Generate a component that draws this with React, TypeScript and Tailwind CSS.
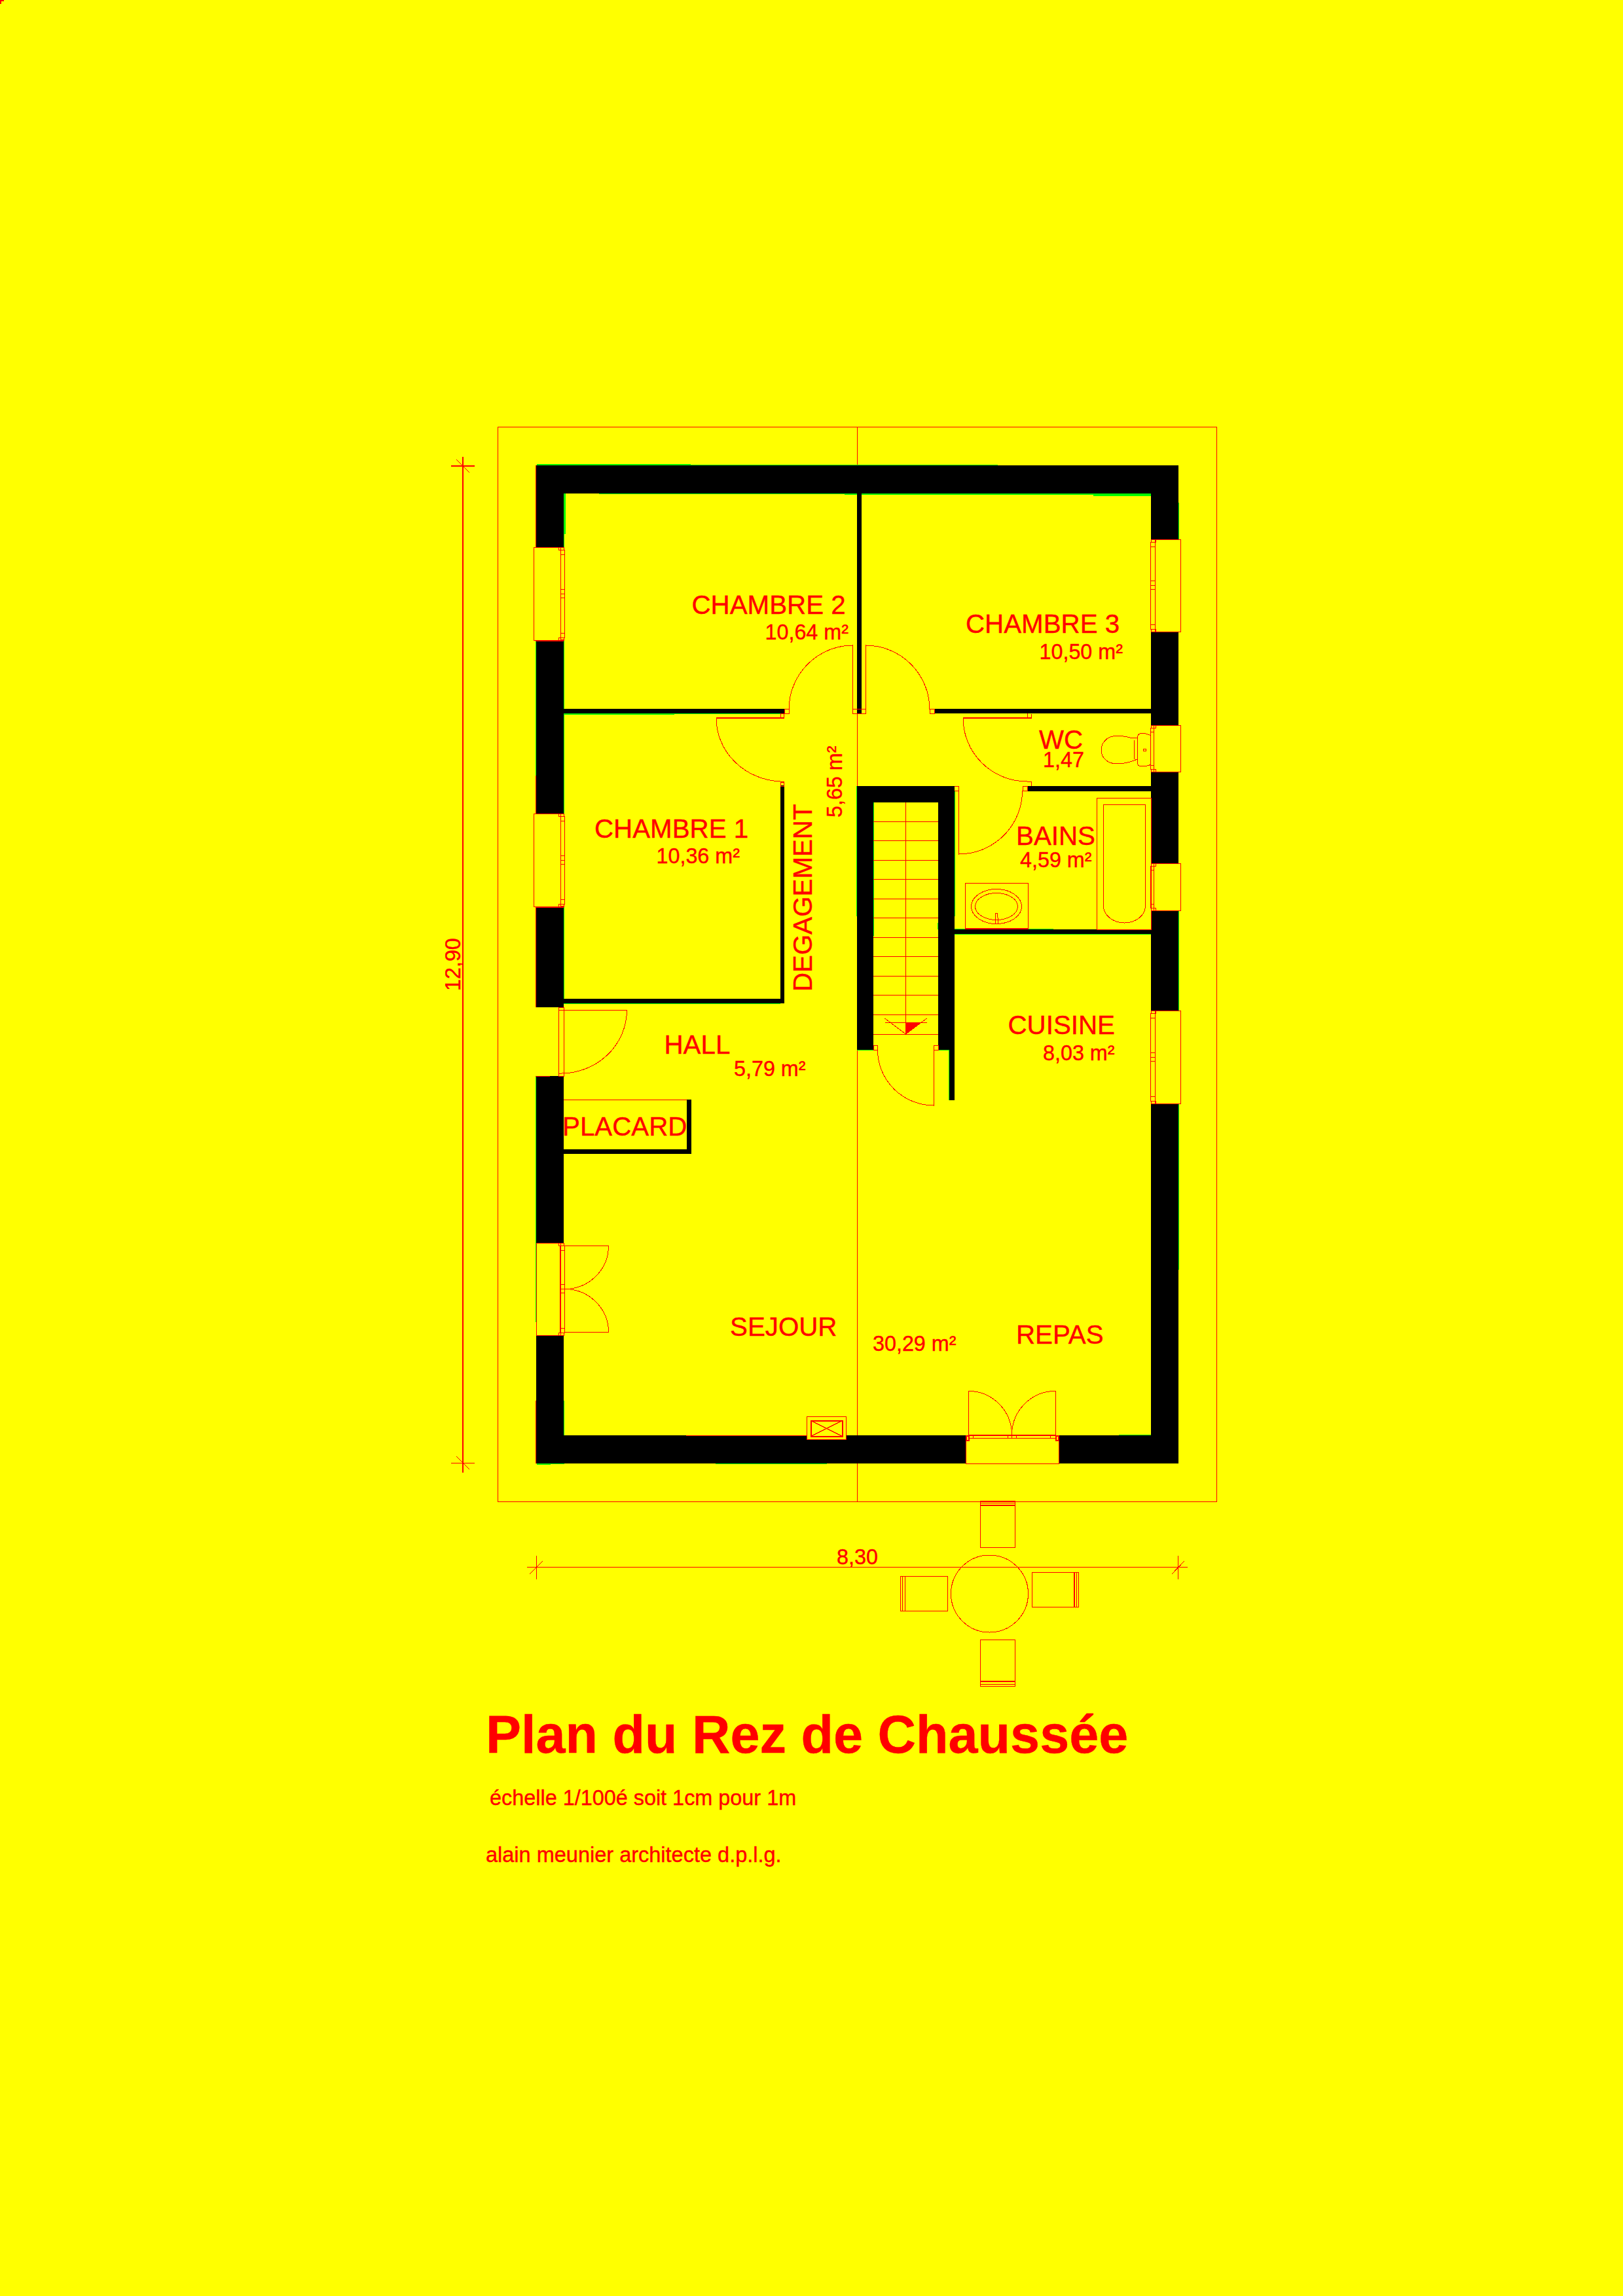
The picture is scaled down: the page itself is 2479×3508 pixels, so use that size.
import React from "react";

const RED = "#ff0000";
const YEL = "#ffff00";
const GRN = "#00ff00";

type Box = [number, number, number, number];

const walls: Box[] = [
  [819, 711, 1800, 754],
  [819, 754, 861, 837], [819, 979, 861, 1243], [819, 1386, 861, 1539], [819, 1644, 861, 1899], [819, 2040, 861, 2236],
  [1758, 754, 1800, 824], [1758, 965, 1800, 1108], [1758, 1179, 1800, 1319], [1758, 1391, 1800, 1544], [1758, 1686, 1800, 2236],
  [861, 2193, 1475, 2236], [1617, 2193, 1758, 2236],
  [1309, 754, 1316, 1090],
  [861, 1083, 1198, 1090],
  [1427, 1083, 1758, 1090],
  [1569, 1201, 1758, 1209],
  [1458, 1420, 1758, 1427],
  [1192, 1200, 1198, 1533],
  [861, 1526, 1198, 1533],
  [1049, 1680, 1056, 1763],
  [861, 1756, 1056, 1763],
  [1309, 1201, 1458, 1226],
  [1309, 1226, 1334, 1604],
  [1433, 1226, 1458, 1604],
  [1450, 1604, 1458, 1681],
];

const greens: Box[] = [
  [820, 709, 1055, 711], [1055, 710, 1524, 711],
  [915, 754, 1290, 755], [1290, 754, 1670, 756], [1670, 754, 1758, 758],
  [861, 754, 864, 816], [861, 816, 862, 837], [861, 979, 862, 1243], [861, 1386, 862, 1526],
  [861, 1090, 1030, 1092], [1030, 1090, 1198, 1091], [861, 1533, 1192, 1534],
  [1800, 768, 1801, 824], [1800, 1391, 1801, 1544], [1800, 1686, 1801, 1940],
  [1333, 1226, 1335, 1430], [1432, 1410, 1434, 1420], [1458, 1209, 1459, 1400],
  [1308, 1201, 1309, 1400], [1309, 1604, 1334, 1605], [1433, 1604, 1450, 1605], [1449, 1605, 1450, 1681],
  [1458, 1427, 1758, 1428], [1458, 1419, 1609, 1420],
  [820, 2236, 841, 2238], [841, 2236, 862, 2237], [1093, 2236, 1263, 2237], [1709, 2192, 1758, 2193],
  [861, 2140, 862, 2193], [818, 979, 819, 1185], [818, 1644, 819, 2020],
];

const redEdges: Box[] = [
  [818, 711, 819, 837], [818, 1185, 819, 1539], [818, 2140, 819, 2236],
  [818, 977, 861, 980], [818, 1384, 861, 1387], [818, 1644, 840, 1645], [1048, 2193, 1232, 2194],
];

const treads = [1255, 1284, 1314, 1343, 1373, 1402, 1432, 1461, 1491, 1520, 1550, 1580];

type Label = { t: string; x: number; y: number; s: number; r?: boolean };

const labels: Label[] = [
  { t: "CHAMBRE 2", x: 1056.5, y: 938, s: 40.3 },
  { t: "10,64 m²", x: 1168.5, y: 977, s: 32.3 },
  { t: "CHAMBRE 3", x: 1475, y: 967, s: 40.3 },
  { t: "10,50 m²", x: 1587.5, y: 1007, s: 32.3 },
  { t: "WC", x: 1587, y: 1144, s: 40.3 },
  { t: "1,47", x: 1593, y: 1172, s: 32.3 },
  { t: "BAINS", x: 1552, y: 1291, s: 40.3 },
  { t: "4,59 m²", x: 1558, y: 1325, s: 32.3 },
  { t: "CUISINE", x: 1539.5, y: 1580, s: 40.3 },
  { t: "8,03 m²", x: 1593, y: 1620, s: 32.3 },
  { t: "CHAMBRE 1", x: 908, y: 1280, s: 40.3 },
  { t: "10,36 m²", x: 1002.5, y: 1319, s: 32.3 },
  { t: "HALL", x: 1014.5, y: 1610, s: 40.3 },
  { t: "5,79 m²", x: 1121, y: 1644, s: 32.3 },
  { t: "PLACARD", x: 859, y: 1735, s: 40.3 },
  { t: "SEJOUR", x: 1115, y: 2041, s: 40.3 },
  { t: "30,29 m²", x: 1333, y: 2064, s: 32.3 },
  { t: "REPAS", x: 1552, y: 2053, s: 40.3 },
  { t: "8,30", x: 1278, y: 2390, s: 32.3 },
  { t: "DEGAGEMENT", x: 1240, y: 1515, s: 40.3, r: true },
  { t: "5,65 m²", x: 1286, y: 1249, s: 32.3, r: true },
  { t: "12,90", x: 703, y: 1514, s: 32.3, r: true },
];

function B({ x0, y0, x1, y1, w = 1, fill = "none" }: { x0: number; y0: number; x1: number; y1: number; w?: number; fill?: string }) {
  return <rect x={x0} y={y0} width={x1 - x0} height={y1 - y0} fill={fill} stroke={RED} strokeWidth={w} />;
}

function L({ d, w = 1 }: { d: string; w?: number }) {
  return <path d={d} fill="none" stroke={RED} strokeWidth={w} />;
}

function Ticks({ x0, x1, ys }: { x0: number; x1: number; ys: number[] }) {
  return (
    <>
      {ys.map((y) => (
        <line key={y} x1={x0} x2={x1} y1={y} y2={y} stroke={RED} strokeWidth={1} />
      ))}
    </>
  );
}

function LeftWindow({ top, bottom, x = 815 }: { top: number; bottom: number; x?: number }) {
  const mid = (top + bottom) / 2;
  return (
    <g>
      <B x0={x} y0={top} x1={856} y1={bottom} fill={YEL} />
      <B x0={856} y0={top + 4} x1={862} y1={bottom - 4} />
      <B x0={853} y0={top} x1={861} y1={top + 4} />
      <B x0={853} y0={bottom - 4} x1={861} y1={bottom} />
      <Ticks x0={856} x1={862} ys={[top + 11, mid - 7, mid, mid + 6, bottom - 11]} />
    </g>
  );
}

function RightWindow({ top, bottom, x = 1764, mids = true }: { top: number; bottom: number; x?: number; mids?: boolean }) {
  const mid = (top + bottom) / 2;
  return (
    <g>
      <B x0={x} y0={top} x1={1803} y1={bottom} fill={YEL} />
      <B x0={1757} y0={top + 4} x1={x} y1={bottom - 4} />
      <B x0={1758} y0={top} x1={1765} y1={top + 4} />
      <B x0={1758} y0={bottom - 4} x1={1765} y1={bottom} />
      <Ticks x0={1757} x1={x} ys={mids ? [top + 11, mid - 7, mid, mid + 6, bottom - 11] : [top + 10, bottom - 10]} />
    </g>
  );
}

function Plan() {
  return (
    <svg
      width={1200}
      height={1960}
      viewBox="680 640 1200 1960"
      shapeRendering="crispEdges"
      className="block [font-family:'Liberation_Sans',Arial,sans-serif]"
    >
      {/* terrain outline and centre line */}
      <B x0={760.5} y0={652.5} x1={1858.5} y1={2294.5} />
      <L d="M1309.5 652V1090M1309.5 1090V1201M1309.5 1604V2294" />

      {greens.map(([a, b, c, d]) => (
        <rect key={`g${a}-${b}`} x={a} y={b} width={c - a} height={d - b} fill={GRN} />
      ))}
      {walls.map(([a, b, c, d]) => (
        <rect key={`w${a}-${b}`} x={a} y={b} width={c - a} height={d - b} fill="#000000" />
      ))}
      {redEdges.map(([a, b, c, d]) => (
        <rect key={`r${a}-${b}`} x={a} y={b} width={c - a} height={d - b} fill={RED} />
      ))}

      {/* windows */}
      <LeftWindow top={836} bottom={978} />
      <LeftWindow top={1243} bottom={1385} />
      <LeftWindow top={1899} bottom={2040} x={819} />
      <RightWindow top={824} bottom={965} />
      <RightWindow top={1544} bottom={1686} />
      <RightWindow top={1108} bottom={1179} x={1762} mids={false} />
      <RightWindow top={1319} bottom={1391} x={1762} mids={false} />

      {/* chambre 2 / chambre 3 doors */}
      <L d="M1302.5 1090V986A98 98 0 0 0 1205 1084V1090" />
      <L d="M1322.5 1090V986A98 98 0 0 1 1420 1084V1090" />
      <B x0={1302.5} y0={1083.5} x1={1322.5} y1={1090.5} />
      <B x0={1198.5} y0={1083.5} x1={1205.5} y1={1090.5} />
      <B x0={1420.5} y0={1083.5} x1={1427.5} y1={1090.5} />

      {/* chambre 1 door */}
      <L d="M1197.5 1097H1094A103 97 0 0 0 1192 1194H1198" w={1} />
      <line x1={1094} x2={1197} y1={1097} y2={1097} stroke={RED} strokeWidth={2} />
      <B x0={1192.5} y0={1090.5} x1={1197.5} y1={1097.5} />
      <B x0={1192.5} y0={1195.5} x1={1197.5} y1={1201.5} />

      {/* wc door */}
      <L d="M1575.5 1091V1097H1471A98 97 0 0 0 1569 1194H1575.5V1201" />
      <line x1={1471} x2={1575} y1={1097} y2={1097} stroke={RED} strokeWidth={2} />
      <line x1={1569} x2={1569} y1={1090} y2={1097} stroke={RED} strokeWidth={1} />

      {/* bains door */}
      <L d="M1458 1201.5H1464.5V1305A97.5 97 0 0 0 1561.6 1208" />
      <L d="M1458 1208H1464.5" />
      <B x0={1562} y0={1201.5} x1={1569} y1={1208.5} />

      {/* entrance */}
      <rect x={853} y={1539} width={8} height={105} fill={YEL} stroke={RED} strokeWidth={1} />
      <L d="M853 1543.5H957.5A101 97 0 0 1 853 1640" />

      {/* placard */}
      <L d="M861 1680.5H1049" />

      {/* french window, séjour */}
      <L d="M862.5 1903.5H929.5A67 66 0 0 1 862 1969.5A67 66 0 0 1 929.5 2035.5H862" />
      <line x1={856} x2={856} y1={1903} y2={2036} stroke={RED} strokeWidth={2} />

      {/* vent */}
      <B x0={1232.5} y0={2164.5} x1={1292.5} y1={2199.5} fill={YEL} />
      <B x0={1238.5} y0={2170.5} x1={1286.5} y1={2194.5} w={2} />
      <L d="M1238.5 2170.5L1286.5 2194.5M1238.5 2194.5L1286.5 2170.5" />

      {/* stairs */}
      {treads.map((y) => (
        <line key={y} x1={1334} x2={1433} y1={y + 0.5} y2={y + 0.5} stroke={RED} strokeWidth={1} />
      ))}
      <L d="M1383.5 1226V1580" />
      <L d="M1351.5 1562.5H1415.5" />
      <L d="M1351.5 1556L1383.5 1580L1415.5 1556" />
      <polygon points="1383,1562 1407,1562 1383,1580" fill={RED} />
      <B x0={1334.5} y0={1597.5} x1={1340.5} y1={1604.5} />
      <B x0={1426.5} y0={1597.5} x1={1433.5} y1={1604.5} />
      <L d="M1340.5 1604A86 85 0 0 0 1426.5 1689V1604" />

      {/* bath */}
      <B x0={1675.5} y0={1219.5} x1={1758} y1={1420} />
      <L d="M1685.5 1229.5H1749.5V1384A32 26 0 0 1 1685.5 1384Z" />

      {/* basin */}
      <B x0={1474.5} y0={1349.5} x1={1570.5} y1={1419} />
      <line x1={1474} x2={1570} y1={1419} y2={1419} stroke={RED} strokeWidth={2} />
      <ellipse cx={1522} cy={1385} rx={38.5} ry={26.5} fill="none" stroke={RED} strokeWidth={1} />
      <ellipse cx={1522} cy={1385} rx={32.5} ry={20.5} fill="none" stroke={RED} strokeWidth={1} />
      <L d="M1520 1411V1402L1521 1395H1523L1524 1402V1411Z" />

      {/* toilet */}
      <L d="M1737 1127H1726C1716 1124 1705 1124 1700 1125C1689 1127 1682 1136 1682 1146C1682 1158 1692 1167 1706 1167C1716 1167 1728 1164 1737 1160" />
      <L d="M1758 1124C1752 1121 1745 1120 1741 1121C1738 1122 1737 1125 1737 1130V1163C1737 1169 1739 1171 1743 1171C1749 1171 1754 1170 1758 1168" />
      <L d="M1732 1131V1160" />
      <ellipse cx={1748.5} cy={1146} rx={2} ry={2} fill="none" stroke={RED} strokeWidth={1} />

      {/* french window, repas */}
      <rect x={1475} y={2193} width={142} height={43} fill={YEL} stroke={RED} strokeWidth={1} />
      <L d="M1479.5 2192.5V2125.5A66 67 0 0 1 1545.5 2192.5A66 67 0 0 1 1612.5 2125.5V2192.5Z" />
      <B x0={1479.5} y0={2192.5} x1={1612.5} y1={2197.5} />
      <L d="M1486.5 2192V2198M1539.5 2192V2198M1545.5 2187V2198M1552.5 2192V2198M1604.5 2192V2198" />
      <B x0={1475.5} y0={2194} x1={1479.5} y1={2201} w={2} />
      <B x0={1612.5} y0={2194} x1={1617} y1={2201} w={2} />

      {/* table and chairs */}
      <circle cx={1511.5} cy={2435} r={59} fill="none" stroke={RED} strokeWidth={1} />
      <B x0={1497.5} y0={2293.5} x1={1550.5} y1={2364.5} />
      <L d="M1497.5 2296.5H1550.5" />
      <line x1={1497} x2={1551} y1={2300} y2={2300} stroke={RED} strokeWidth={2} />
      <B x0={1497.5} y0={2505.5} x1={1550.5} y1={2576.5} />
      <L d="M1497.5 2573.5H1550.5" />
      <line x1={1497} x2={1551} y1={2569} y2={2569} stroke={RED} strokeWidth={2} />
      <B x0={1375.5} y0={2408.5} x1={1447.5} y1={2461.5} />
      <L d="M1378.5 2408V2461M1382.5 2408V2461" />
      <B x0={1576.5} y0={2402.5} x1={1647.5} y1={2455.5} />
      <L d="M1644.5 2402V2455" />
      <line x1={1641} x2={1641} y1={2402} y2={2456} stroke={RED} strokeWidth={2} />

      {/* dimension lines */}
      <line x1={707} x2={707} y1={698} y2={2250} stroke={RED} strokeWidth={2} />
      <line x1={689} x2={725} y1={712} y2={712} stroke={RED} strokeWidth={2} />
      <L d="M689 2235.5H725M697 702L717 722M697 2225L717 2245" />
      <L d="M805 2394.5H1814M819.5 2377V2413M1799.5 2377V2413M809 2405L829 2385M1790 2405L1809 2385" />

      {labels.map((l) => (
        <text
          key={l.t}
          x={l.x}
          y={l.y}
          fontSize={l.s}
          fill={RED}
          stroke={RED}
          strokeWidth={0.4}
          transform={l.r ? `rotate(-90 ${l.x} ${l.y})` : undefined}
        >
          {l.t}
        </text>
      ))}
    </svg>
  );
}

export default function App() {
  return (
    <div className="relative w-[2479px] h-[3508px] bg-[#ffff00] pt-[640px] pl-[680px] overflow-hidden text-[#ff0000] [font-family:'Liberation_Sans',Arial,sans-serif]">
      <div className="absolute left-0 top-0 w-[6px] h-[6px] border-l-2 border-t-2 border-[#ff0000]" />
      <Plan />
      <div className="ml-[62px] mt-[10px] flex flex-col items-start [-webkit-text-stroke:0.4px_#ff0000]">
        <h1 className="text-[81px] leading-[80px] font-bold">Plan du Rez de Chaussée</h1>
        <p className="ml-[6px] mt-[41px] text-[32.4px] leading-[32px]">échelle 1/100é soit 1cm pour 1m</p>
        <p className="ml-[0px] mt-[55px] text-[32.5px] leading-[32px]">alain meunier architecte d.p.l.g.</p>
      </div>
    </div>
  );
}
